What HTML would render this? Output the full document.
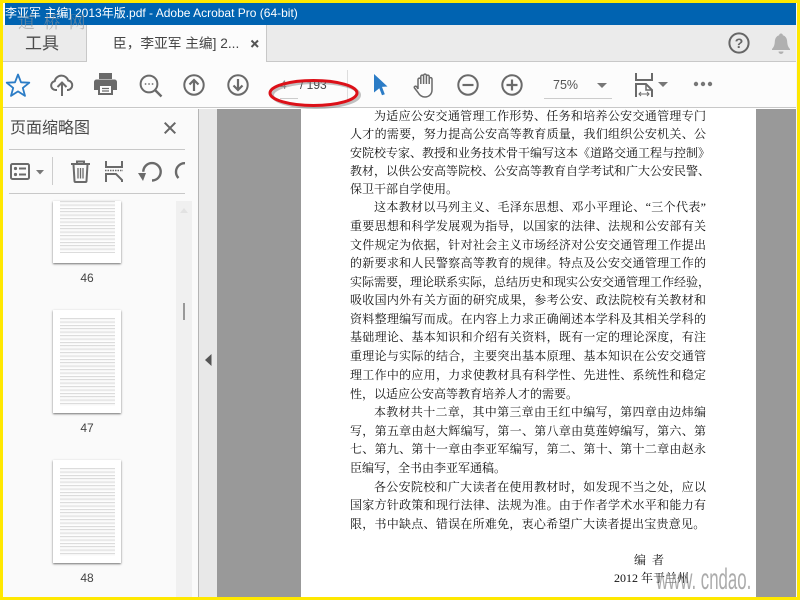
<!DOCTYPE html>
<html lang="zh"><head><meta charset="utf-8"><title>Acrobat</title>
<style>
html,body{margin:0;padding:0;width:800px;height:600px;overflow:hidden;background:#ffe800;}
*{box-sizing:border-box}
div,span{position:absolute}
body{font-family:"Liberation Sans","Noto Sans CJK SC",sans-serif;}
.l{left:350px;width:356px;height:18px;font:12px/18px "Liberation Serif","Noto Serif CJK SC",serif;color:#111;text-align:justify;text-align-last:justify;white-space:nowrap;}
.i{left:374px;width:332px}
.s{text-align-last:left}
.th{left:53px;width:68px;background:#fff;box-shadow:0 1px 2px rgba(0,0,0,.55);overflow:hidden}
.tl{left:7px;right:6px;background:repeating-linear-gradient(to bottom,#dcdcdc 0,#dcdcdc 1px,#f4f4f4 1px,#fff 3.4px)}
.n{left:53px;width:68px;text-align:center;font-size:12px;color:#444}
svg{position:absolute;overflow:visible}
</style></head><body>
<div id="w" style="left:3px;top:3px;width:794px;height:594px;background:#fff;overflow:hidden">
</div>
<div style="left:5px;top:3px;width:791px;height:22px;background:#0063b1"></div>
<div style="left:5px;top:3px;height:22px;line-height:21px;font-size:12px;color:#fff;white-space:nowrap">李亚军 主编] 2013年版.pdf - Adobe Acrobat Pro (64-bit)</div>
<div style="left:3px;top:25px;width:794px;height:37px;background:#ebebeb;border-bottom:1px solid #c8c8c8"></div>
<div style="left:86px;top:25px;width:181px;height:37px;background:#fcfcfc;border-left:1px solid #c8c8c8;border-right:1px solid #c8c8c8"></div>
<div style="left:87px;top:61px;width:179px;height:2px;background:#fcfcfc"></div>
<div style="left:25px;top:32px;font-size:17px;line-height:24px;color:#4b4b4b">工具</div>
<div style="left:113px;top:34px;font-size:13.7px;line-height:20px;color:#444;white-space:nowrap">臣，李亚军 主编] 2...</div>
<svg style="left:249px;top:38px" width="12" height="12" viewBox="0 0 12 12"><path d="M2.5 2.5l6.5 6.5M9 2.5L2.5 9" stroke="#555" stroke-width="2"/></svg>
<svg style="left:728px;top:32px" width="22" height="22" viewBox="0 0 22 22"><circle cx="11" cy="11" r="9.6" fill="none" stroke="#666" stroke-width="2"/><text x="11" y="16" font-size="14" font-weight="bold" text-anchor="middle" fill="#666" font-family="Liberation Sans">?</text></svg>
<svg style="left:771px;top:33px" width="20" height="22" viewBox="0 0 20 22"><path d="M10 0.5a1.8 1.8 0 0 1 1.8 1.8c3 .8 4.2 3.4 4.4 6.4.2 3.200.8 5 2.800 7.300v1H1v-1c2-2.300 2.600-4.100 2.800-7.300.2-3 1.400-5.600 4.400-6.400A1.800 1.800 0 0 1 10 .5zM7.500 18.500h5a2.500 2.500 0 0 1-5 0z" fill="#b0b0b0"/></svg>

<div style="left:3px;top:62px;width:794px;height:46px;background:#fcfcfc;border-bottom:1px solid #c8c8c8"></div>
<svg style="left:6px;top:73px" width="24" height="24" viewBox="0 0 24 24"><path d="M12 1.500l3 7.800 8.300.4-6.500 5.200 2.200 8-7-4.500-7 4.500 2.200-8L.7 9.700 9 9.300z" fill="none" stroke="#2b7cc6" stroke-width="1.800" stroke-linejoin="round"/></svg>
<svg style="left:50px;top:73px" width="24" height="24" viewBox="0 0 24 24"><path d="M7 17H5.500a4.500 4.500 0 0 1-.8-8.900 7 7 0 0 1 13.500-.6A4.800 4.800 0 0 1 18 17h-1" fill="none" stroke="#6a6a6a" stroke-width="2"/><path d="M12 23V10M7.500 14l4.500-4.500 4.500 4.500" fill="none" stroke="#6a6a6a" stroke-width="2"/></svg>
<svg style="left:94px;top:73px" width="23" height="22" viewBox="0 0 23 22"><path d="M5 0h13v6H5z" fill="#6a6a6a"/><path d="M2.500 6.500h18A2.500 2.500 0 0 1 23 9v8h-4v5H4v-5H0V9a2.500 2.500 0 0 1 2.500-2.500z" fill="#6a6a6a"/><path d="M6 13h11v7H6z" fill="#fff"/><path d="M8 15.500h7M8 18h7" stroke="#6a6a6a" stroke-width="1.200"/></svg>
<svg style="left:139px;top:74px" width="24" height="24" viewBox="0 0 24 24"><circle cx="10" cy="10" r="8.400" fill="none" stroke="#6a6a6a" stroke-width="2"/><path d="M16 16l6.500 6.500" stroke="#6a6a6a" stroke-width="2.400"/><path d="M5.800 10h1.500M9.300 10h1.500M12.800 10h1.500" stroke="#6a6a6a" stroke-width="1.600"/></svg>
<svg style="left:183px;top:74px" width="22" height="22" viewBox="0 0 22 22"><circle cx="11" cy="11" r="9.700" fill="none" stroke="#6a6a6a" stroke-width="2"/><path d="M11 17V6M6.500 10.500L11 6l4.500 4.500" fill="none" stroke="#6a6a6a" stroke-width="2.200"/></svg>
<svg style="left:227px;top:74px" width="22" height="22" viewBox="0 0 22 22"><circle cx="11" cy="11" r="9.700" fill="none" stroke="#6a6a6a" stroke-width="2"/><path d="M11 5v11M6.500 11.500L11 16l4.500-4.500" fill="none" stroke="#6a6a6a" stroke-width="2.200"/></svg>
<div style="left:280px;top:77px;font-size:12px;line-height:16px;color:#888">4</div>
<div style="left:300px;top:77px;font-size:12px;line-height:16px;color:#444;white-space:nowrap">/ 193</div>
<div style="left:280px;top:98px;width:18px;height:1px;background:#ccc"></div>
<div style="left:347px;top:70px;width:1px;height:30px;background:#ddd"></div>
<svg style="left:268px;top:78px" width="92" height="31" viewBox="0 0 92 31"><ellipse cx="46" cy="15" rx="43.500" ry="12.500" fill="none" stroke="#777" stroke-width="3" opacity=".45" transform="translate(2 2)"/><ellipse cx="45.500" cy="15" rx="43.500" ry="12.500" fill="none" stroke="#dc1018" stroke-width="3"/></svg>
<svg style="left:374px;top:74px" width="14" height="22" viewBox="0 0 14 22"><path d="M0 0l13.500 12.500-5.500.4 2.800 7.300-2.800 1.100-2.700-7L0 18.500z" fill="#2b7cc6"/></svg>
<svg style="left:413px;top:73px" width="23" height="25" viewBox="0 0 23 25"><path d="M5 16V6.500a1.400 1.400 0 0 1 2.800 0V11M7.800 11V3.500a1.400 1.400 0 0 1 2.800 0V11M10.600 11V2.500a1.400 1.400 0 0 1 2.800 0V11M13.400 11V3.500a1.400 1.400 0 0 1 2.800 0V11M16.200 11V6a1.400 1.400 0 0 1 2.800 0v11c0 4-3 7-7 7-3.500 0-5.300-1.500-7-4.500L1.500 15c-.8-1.500 1-2.500 2.300-1.200L5 16" fill="none" stroke="#6a6a6a" stroke-width="1.500" stroke-linejoin="round"/></svg>
<svg style="left:457px;top:74px" width="22" height="22" viewBox="0 0 22 22"><circle cx="11" cy="11" r="9.700" fill="none" stroke="#6a6a6a" stroke-width="2"/><path d="M5.500 11h11" stroke="#6a6a6a" stroke-width="2.200"/></svg>
<svg style="left:501px;top:74px" width="22" height="22" viewBox="0 0 22 22"><circle cx="11" cy="11" r="9.700" fill="none" stroke="#6a6a6a" stroke-width="2"/><path d="M5.500 11h11M11 5.500v11" stroke="#6a6a6a" stroke-width="2.200"/></svg>
<div style="left:553px;top:77px;font-size:12.500px;line-height:16px;color:#555">75%</div>
<svg style="left:597px;top:83px" width="10" height="6"><path d="M0 0h10L5 5z" fill="#777"/></svg>
<div style="left:544px;top:98px;width:68px;height:1px;background:#ccc"></div>
<svg style="left:635px;top:72px" width="18" height="26" viewBox="0 0 18 26"><path d="M1 1v7h16V1" fill="none" stroke="#6a6a6a" stroke-width="2"/><path d="M1 25V12h10l6 6v7" fill="none" stroke="#6a6a6a" stroke-width="2"/><path d="M11 12v6h6" fill="none" stroke="#6a6a6a" stroke-width="1.500"/><path d="M4 22h10M6 20l-2 2 2 2M12 20l2 2-2 2" fill="none" stroke="#6a6a6a" stroke-width="1"/></svg>
<svg style="left:658px;top:82px" width="10" height="6"><path d="M0 0h10L5 5z" fill="#777"/></svg>
<svg style="left:693px;top:81px" width="20" height="6"><circle cx="3" cy="3" r="2.200" fill="#777"/><circle cx="10" cy="3" r="2.200" fill="#777"/><circle cx="17" cy="3" r="2.200" fill="#777"/></svg>

<div style="left:3px;top:109px;width:195px;height:488px;background:#fafafa"></div>
<div style="left:198px;top:109px;width:1px;height:488px;background:#b4b4b4"></div>
<div style="left:199px;top:109px;width:18px;height:488px;background:#e8e8e8"></div>
<div style="left:217px;top:109px;width:84px;height:488px;background:#999"></div>
<div style="left:301px;top:109px;width:455px;height:488px;background:#fff"></div>
<div style="left:756px;top:109px;width:41px;height:488px;background:#999"></div>
<svg style="left:205px;top:354px" width="7" height="12"><path d="M6.500 0v12L0 6z" fill="#555"/></svg>

<div style="left:10px;top:118px;font-size:16px;line-height:22px;color:#4b4b4b;white-space:nowrap">页面缩略图</div>
<svg style="left:164px;top:122px" width="12" height="12" viewBox="0 0 12 12"><path d="M.7.700l10.600 10.600M11.300.700L.7 11.300" stroke="#666" stroke-width="2"/></svg>
<div style="left:9px;top:149px;width:176px;height:1px;background:#c8c8c8"></div>
<div style="left:9px;top:193px;width:176px;height:1px;background:#c8c8c8"></div>
<div style="left:52px;top:157px;width:1px;height:28px;background:#ccc"></div>
<svg style="left:10px;top:163px" width="20" height="17" viewBox="0 0 20 17"><rect x="1" y="1" width="18" height="15" rx="1.500" fill="none" stroke="#6a6a6a" stroke-width="2"/><circle cx="5.500" cy="5.500" r="1.600" fill="#6a6a6a"/><circle cx="5.500" cy="11.500" r="1.600" fill="#6a6a6a"/><path d="M9 5.500h7M9 11.500h7" stroke="#6a6a6a" stroke-width="2"/></svg>
<svg style="left:36px;top:170px" width="8" height="5"><path d="M0 0h8L4 4.500z" fill="#777"/></svg>
<svg style="left:70px;top:160px" width="21" height="23" viewBox="0 0 21 23"><path d="M1 4h19M7 4V1.500h7V4" fill="none" stroke="#6a6a6a" stroke-width="2"/><path d="M3.500 4.500l1 16.500a1 1 0 0 0 1 1h10a1 1 0 0 0 1-1l1-16.500" fill="none" stroke="#6a6a6a" stroke-width="2"/><path d="M8 8v10.500M10.500 8v10.500M13 8v10.500" stroke="#6a6a6a" stroke-width="1.300"/></svg>
<svg style="left:105px;top:161px" width="18" height="21" viewBox="0 0 18 21"><path d="M1 0v6h16V0" fill="none" stroke="#6a6a6a" stroke-width="2"/><path d="M0 9.500h18" stroke="#6a6a6a" stroke-width="1.500" stroke-dasharray="1.500 1"/><path d="M1 21v-8h10l6 6v2" fill="none" stroke="#6a6a6a" stroke-width="2"/></svg>
<svg style="left:137px;top:161px" width="22" height="22" viewBox="0 0 22 22"><path d="M12 19.500a8.700 8.700 0 1 0-8.700-8.700" transform="translate(3 0)" fill="none" stroke="#6a6a6a" stroke-width="2.400"/><path d="M1 12h8l-3 8z" fill="#6a6a6a"/></svg>
<svg style="left:171px;top:161px" width="14" height="22" viewBox="0 0 14 22"><path d="M14 2.200A8.700 8.700 0 0 0 5 11c0 2.500 1 4.500 2.500 6" fill="none" stroke="#6a6a6a" stroke-width="2.400"/></svg>

<div style="left:176px;top:201px;width:16px;height:396px;background:#f0f0f0"></div>
<svg style="left:180px;top:208px" width="8" height="5"><path d="M0 5h8L4 0z" fill="#e2e2e2"/></svg>
<div style="left:183px;top:303px;width:2px;height:17px;background:#999"></div>

<div class="th" style="top:201px;height:62px"><div class="tl" style="top:0;height:52px"></div></div>
<div class="n" style="top:270px;line-height:16px">46</div>
<div class="th" style="top:310px;height:103px"><div class="tl" style="top:8px;height:88px"></div></div>
<div class="n" style="top:420px;line-height:16px">47</div>
<div class="th" style="top:460px;height:103px"><div class="tl" style="top:8px;height:88px"></div></div>
<div class="n" style="top:570px;line-height:16px">48</div>

<div class="l i" style="top:107px">为适应公安交通管理工作形势、任务和培养公安交通管理专门</div>
<div class="l" style="top:125px">人才的需要，努力提高公安高等教育质量，我们组织公安机关、公</div>
<div class="l" style="top:144px">安院校专家、教授和业务技术骨干编写这本《道路交通工程与控制》</div>
<div class="l" style="top:162px">教材，以供公安高等院校、公安高等教育自学考试和广大公安民警、</div>
<div class="l s" style="top:180px">保卫干部自学使用。</div>
<div class="l i" style="top:198px">这本教材以马列主义、毛泽东思想、邓小平理论、“三个代表”</div>
<div class="l" style="top:217px">重要思想和科学发展观为指导，以国家的法律、法规和公安部有关</div>
<div class="l" style="top:236px">文件规定为依据，针对社会主义市场经济对公安交通管理工作提出</div>
<div class="l" style="top:254px">的新要求和人民警察高等教育的规律。特点及公安交通管理工作的</div>
<div class="l" style="top:273px">实际需要，理论联系实际，总结历史和现实公安交通管理工作经验，</div>
<div class="l" style="top:291px">吸收国内外有关方面的研究成果，参考公安、政法院校有关教材和</div>
<div class="l" style="top:310px">资料整理编写而成。在内容上力求正确阐述本学科及其相关学科的</div>
<div class="l" style="top:328px">基础理论、基本知识和介绍有关资料，既有一定的理论深度，有注</div>
<div class="l" style="top:347px">重理论与实际的结合，主要突出基本原理、基本知识在公安交通管</div>
<div class="l" style="top:366px">理工作中的应用，力求使教材具有科学性、先进性、系统性和稳定</div>
<div class="l s" style="top:385px">性，以适应公安高等教育培养人才的需要。</div>
<div class="l i" style="top:403px">本教材共十二章，其中第三章由王红中编写，第四章由边炜编</div>
<div class="l" style="top:422px">写，第五章由赵大辉编写，第一、第八章由莫莲婷编写，第六、第</div>
<div class="l" style="top:440px">七、第九、第十一章由李亚军编写，第二、第十、第十二章由赵永</div>
<div class="l s" style="top:459px">臣编写，全书由李亚军通稿。</div>
<div class="l i" style="top:478px">各公安院校和广大读者在使用教材时，如发现不当之处，应以</div>
<div class="l" style="top:496px">国家方针政策和现行法律、法规为准。由于作者学术水平和能力有</div>
<div class="l s" style="top:515px;letter-spacing:.26px">限，书中缺点、错误在所难免，衷心希望广大读者提出宝贵意见。</div>
<div class="l s" style="left:634px;top:551px;width:auto">编&nbsp;&nbsp;者</div>
<div class="l s" style="left:614px;top:569px;width:auto">2012 年于兰州</div>

<div style="left:656px;top:562px;font:30px/36px 'Liberation Sans','DejaVu Sans',sans-serif;color:rgba(120,120,120,.62);transform:scaleX(.56);transform-origin:0 0;white-space:nowrap">www. cndao.</div>
<div style="left:18px;top:10px;font:17px/22px 'Noto Serif CJK SC',serif;color:rgba(150,150,150,.6);white-space:nowrap;letter-spacing:2px">道 桥 网</div>

<div style="left:796px;top:3px;width:1px;height:594px;background:#f4f4f4"></div>
</body></html>
